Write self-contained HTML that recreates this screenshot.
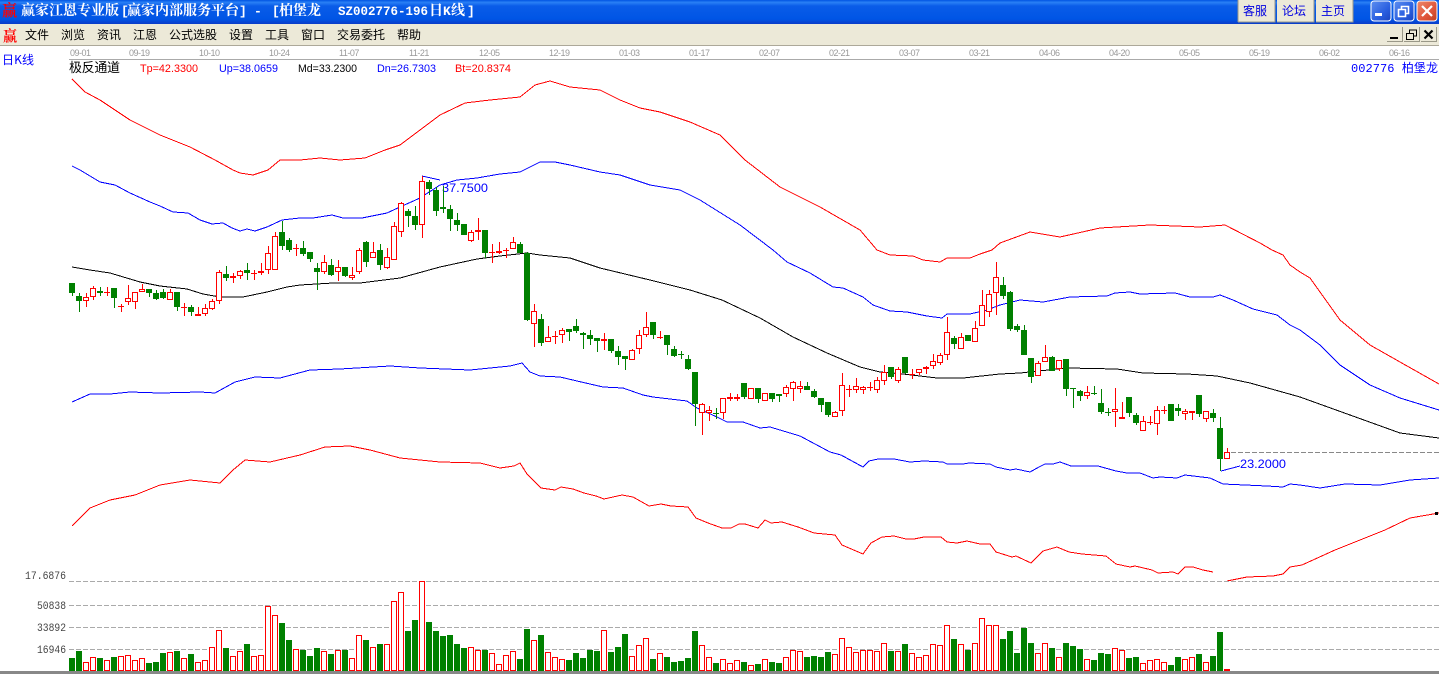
<!DOCTYPE html>
<html lang="zh"><head><meta charset="utf-8"><title>赢家江恩专业版</title>
<style>html,body{margin:0;padding:0;background:#fff;width:1439px;height:674px;overflow:hidden}svg{display:block}text{white-space:pre}</style></head>
<body>
<svg xmlns="http://www.w3.org/2000/svg" width="1439" height="674" viewBox="0 0 1439 674">
<defs>
<linearGradient id="tb" x1="0" y1="0" x2="0" y2="1"><stop offset="0" stop-color="#0054E3"/><stop offset=".1" stop-color="#2a80f5"/><stop offset=".25" stop-color="#0a5ce8"/><stop offset=".8" stop-color="#0055E5"/><stop offset="1" stop-color="#0A3BC8"/></linearGradient>
<linearGradient id="bb" x1="0" y1="0" x2="1" y2="1"><stop offset="0" stop-color="#5d8ff0"/><stop offset=".6" stop-color="#2a5fe0"/><stop offset="1" stop-color="#1a44c0"/></linearGradient>
<linearGradient id="rb" x1="0" y1="0" x2="1" y2="1"><stop offset="0" stop-color="#ec8a6c"/><stop offset=".6" stop-color="#e0553a"/><stop offset="1" stop-color="#c0401f"/></linearGradient>
<clipPath id="cp"><rect x="0" y="60" width="1439" height="521"/></clipPath>
</defs>
<rect width="1439" height="674" fill="#fff"/>
<!-- title bar -->
<rect width="1439" height="24" fill="url(#tb)"/>
<text x="2" y="16" font-family="'Noto Serif CJK SC',serif" font-size="16" font-weight="700" fill="#f00" textLength="15" lengthAdjust="spacingAndGlyphs">赢</text>
<g font-family="'Noto Serif CJK SC','Noto Sans CJK SC',serif" font-size="14" font-weight="700" fill="#fff">
<text x="21" y="15" textLength="98" lengthAdjust="spacingAndGlyphs">赢家江恩专业版</text>
<text x="121" y="15" font-family="'Liberation Mono',monospace" font-size="13">[</text>
<text x="127" y="15" textLength="112" lengthAdjust="spacingAndGlyphs">赢家内部服务平台</text>
<text x="239" y="15" font-family="'Liberation Mono',monospace" font-size="13">]</text>
<text x="254" y="15" font-family="'Liberation Mono',monospace" font-size="13">-</text>
<text x="272" y="15" font-family="'Liberation Mono',monospace" font-size="13">[</text>
<text x="279" y="15" textLength="42" lengthAdjust="spacingAndGlyphs">柏堡龙</text>
<text x="338" y="15" font-family="'Liberation Mono',monospace" font-size="13" textLength="90" lengthAdjust="spacingAndGlyphs">SZ002776-196</text>
<text x="429" y="15" textLength="14" lengthAdjust="spacingAndGlyphs">日</text>
<text x="443" y="15" font-family="'Liberation Mono',monospace" font-size="13">K</text>
<text x="451" y="15" textLength="14" lengthAdjust="spacingAndGlyphs">线</text>
<text x="467" y="15" font-family="'Liberation Mono',monospace" font-size="13">]</text>
</g>
<g>
<rect x="1238" y="0" width="37" height="22" fill="#ECE9D8"/><path d="M1238 22V0M1275 0V22H1238" stroke="#9a9888" fill="none"/>
<rect x="1277" y="0" width="37" height="22" fill="#ECE9D8"/><path d="M1277 22H1314V0" stroke="#9a9888" fill="none"/>
<rect x="1316" y="0" width="37" height="22" fill="#ECE9D8"/><path d="M1316 22H1353V0" stroke="#9a9888" fill="none"/>
<g font-family="'WenQuanYi Zen Hei','Noto Sans CJK SC',sans-serif" font-size="12" fill="#0000e0">
<text x="1243" y="15">客服</text><text x="1282" y="15">论坛</text><text x="1321" y="15">主页</text></g>
<rect x="1371" y="1" width="20" height="20" rx="3" fill="url(#bb)" stroke="#fff"/><rect x="1375" y="13" width="7" height="3" fill="#fff"/>
<rect x="1394" y="1" width="20" height="20" rx="3" fill="url(#bb)" stroke="#fff"/><path d="M1398.5 9.5h7v7h-7zM1401.5 9V6.5h7v7H1406" fill="none" stroke="#fff" stroke-width="1.6"/>
<rect x="1417" y="1" width="20" height="20" rx="3" fill="url(#rb)" stroke="#fff"/><path d="M1422 6l10 10M1432 6l-10 10" stroke="#fff" stroke-width="2.2"/>
</g>
<!-- menu bar -->
<rect y="24" width="1439" height="21" fill="#ECE9D8"/><rect y="45" width="1439" height="1" fill="#ACA899"/>
<text x="3" y="41" font-family="'Noto Serif CJK SC',serif" font-size="15" font-weight="700" fill="#f00" textLength="14" lengthAdjust="spacingAndGlyphs">赢</text>
<g font-family="'WenQuanYi Zen Hei','Noto Sans CJK SC',sans-serif" font-size="12" fill="#000">
<text x="25" y="39">文件</text><text x="61" y="39">浏览</text><text x="97" y="39">资讯</text><text x="133" y="39">江恩</text><text x="169" y="39">公式选股</text><text x="229" y="39">设置</text><text x="265" y="39">工具</text><text x="301" y="39">窗口</text><text x="337" y="39">交易委托</text><text x="397" y="39">帮助</text>
</g>
<g shape-rendering="crispEdges">
<path d="M1387 27h15v15h-15zM1404 27h15v15h-15zM1421 27h15v15h-15z" fill="#ECE9D8"/>
<path d="M1387 41.5h15.5V27M1404 41.5h15.5V27M1421 41.5h15.5V27" fill="none" stroke="#9a9888"/>
<rect x="1390" y="37" width="8" height="2" fill="#000"/>
<path d="M1406.5 33.5h7v6h-7zM1409.5 33v-3h7v6h-3" fill="none" stroke="#000"/>
</g>
<path d="M1424.5 30.5l8 8M1432.5 30.5l-8 8" stroke="#000" stroke-width="2.2"/>
<!-- axis -->
<rect x="69" y="59" width="1370" height="1" fill="#aaa"/>
<g font-family="'Liberation Sans',sans-serif" font-size="9" fill="#999" letter-spacing="-.5">
<text x="70" y="56">09-01</text><text x="129" y="56">09-19</text><text x="199" y="56">10-10</text><text x="269" y="56">10-24</text><text x="339" y="56">11-07</text><text x="409" y="56">11-21</text><text x="479" y="56">12-05</text><text x="549" y="56">12-19</text><text x="619" y="56">01-03</text><text x="689" y="56">01-17</text><text x="759" y="56">02-07</text><text x="829" y="56">02-21</text><text x="899" y="56">03-07</text><text x="969" y="56">03-21</text><text x="1039" y="56">04-06</text><text x="1109" y="56">04-20</text><text x="1179" y="56">05-05</text><text x="1249" y="56">05-19</text><text x="1319" y="56">06-02</text><text x="1389" y="56">06-16</text>
</g>
<text x="2" y="64" font-family="'WenQuanYi Zen Hei','Noto Sans CJK SC',sans-serif" font-size="12" fill="#00f" textLength="32">日K线</text>
<text x="69" y="72" font-family="'WenQuanYi Zen Hei','Noto Sans CJK SC',sans-serif" font-size="13" fill="#000" textLength="51">极反通道</text>
<g font-family="'Liberation Sans',sans-serif" font-size="11">
<text x="140" y="72" fill="#f00" textLength="58" lengthAdjust="spacingAndGlyphs">Tp=42.3300</text>
<text x="219" y="72" fill="#00f" textLength="59" lengthAdjust="spacingAndGlyphs">Up=38.0659</text>
<text x="298" y="72" fill="#000" textLength="59" lengthAdjust="spacingAndGlyphs">Md=33.2300</text>
<text x="377" y="72" fill="#00f" textLength="59" lengthAdjust="spacingAndGlyphs">Dn=26.7303</text>
<text x="455" y="72" fill="#f00" textLength="56" lengthAdjust="spacingAndGlyphs">Bt=20.8374</text>
</g>
<text x="1351" y="72" font-family="'Liberation Mono','WenQuanYi Zen Hei','Noto Sans CJK SC',monospace" font-size="12" fill="#00f" textLength="87">002776 柏堡龙</text>
<!-- bands -->
<g fill="none" stroke-width="1" shape-rendering="crispEdges" clip-path="url(#cp)">
<path stroke="#f00" d="M72 79L85 92L100 100L130 120L160 135L190 147L215 160L233 170L240 173L253 175L268 170L280 160L300 160L320 158L340 160L365 158L385 150L400 145L420 130L440 115L465 103L490 100L520 97L535 85L550 81L570 87L600 90L620 100L640 108L660 112L690 122L720 135L745 160L780 187L820 207L860 230L877 250L890 255L913 256L923 260L940 262L947 258L970 258L980 254L992 250L1000 243L1030 232L1060 237L1100 228L1150 225L1200 227L1225 225L1260 243L1272 250L1283 255L1290 265L1300 272L1310 278L1340 320L1370 345L1400 362L1439 384"/>
<path stroke="#00f" d="M72 166L80 170L90 176L100 182L115 185L130 193L150 202L160 206L173 212L188 213L200 220L212 224L223 223L232 228L240 231L247 229L255 231L267 227L282 220L300 218L313 218L332 215L343 218L362 218L387 213L400 207L420 198L440 185L457 180L477 178L500 174L520 172L540 162L555 162L570 165L600 172L620 175L650 185L680 190L700 200L740 225L773 250L787 262L810 273L833 287L843 288L863 297L873 305L890 311L907 312L927 316L942 318L947 314L970 314L987 310L1000 305L1020 300L1043 302L1070 297L1107 296L1115 293L1130 292L1140 294L1175 293L1190 297L1213 297L1220 295L1233 300L1253 309L1277 315L1290 325L1300 330L1320 345L1340 365L1370 385L1400 398L1439 410"/>
<path stroke="#000" d="M72 267L90 270L110 273L120 276L140 282L160 286L187 289L203 294L220 297L243 297L267 292L287 287L300 285L333 283L360 283L400 278L440 267L477 259L500 256L527 253L540 255L570 258L600 268L650 280L690 290L722 300L760 318L793 337L827 353L860 367L880 372L903 374L937 378L963 378L1000 374L1020 373L1067 368L1117 369L1143 373L1187 374L1217 376L1250 383L1300 397L1350 415L1400 433L1439 438"/>
<path stroke="#00f" d="M72 402L90 394L110 394L130 392L160 393L200 392L215 393L235 382L255 377L280 378L310 370L340 369L390 366L420 368L470 370L510 366L522 363L530 372L540 376L560 377L577 381L603 387L623 388L643 395L653 397L687 401L697 408L717 417L727 422L743 422L760 428L770 427L800 436L830 452L841 455L863 467L869 461L878 459L894 459L910 462L924 461L943 462L947 464L963 464L969 463L990 464L996 467L1010 470L1016 469L1030 472L1039 467L1045 464L1053 464L1060 462L1071 466L1098 466L1116 471L1127 473L1140 473L1153 478L1160 477L1177 478L1185 475L1210 478L1223 484L1267 486L1283 487L1290 484L1300 485L1320 488L1345 484L1380 485L1410 480L1439 478"/>
<path stroke="#f00" d="M72 526L90 508L110 500L135 495L160 485L190 480L220 483L233 470L245 460L270 462L300 455L325 447L350 446L370 450L400 458L440 462L480 463L500 468L514 466L520 463L527 474L541 488L555 490L561 487L573 489L584 493L596 496L604 499L622 495L633 497L649 506L661 504L671 506L688 507L696 518L708 523L722 528L731 528L739 524L745 524L758 528L765 520L771 523L782 522L798 527L814 533L835 535L842 545L863 554L871 543L882 537L894 536L906 539L914 539L924 537L941 537L947 542L957 543L967 541L980 544L990 544L996 552L1012 557L1016 556L1031 563L1043 551L1057 547L1069 552L1082 554L1106 556L1116 564L1130 567L1135 566L1152 570L1158 573L1173 572L1178 574L1185 567L1193 567L1203 570L1213 572M1227 581L1247 577L1273 576L1283 574L1290 567L1302 565L1335 550L1360 540L1385 530L1410 518L1439 513"/>
<path stroke="#00f" d="M422 176L440 180M1221 471L1240 466"/>
<path stroke="#888" stroke-dasharray="5 2" d="M1231 452.5H1439"/>
</g>
<rect x="1435" y="512" width="3" height="3" fill="#000"/>
<text x="442" y="192" font-family="'Liberation Sans',sans-serif" font-size="12" fill="#00f" textLength="46" lengthAdjust="spacingAndGlyphs">37.7500</text>
<text x="1240" y="468" font-family="'Liberation Sans',sans-serif" font-size="12" fill="#00f" textLength="46" lengthAdjust="spacingAndGlyphs">23.2000</text>
<!-- candles -->
<g shape-rendering="crispEdges" clip-path="url(#cp)">
<path fill="none" stroke="#008000" d="M72.5 283V296M79.5 293V312M100.5 287V296M114.5 288V308M149.5 289V297M156.5 290V300M163.5 289V299M177.5 292V311M191.5 305V316M226.5 266V281M247.5 263V280M282.5 221V250M289.5 238V252M303.5 241V256M310.5 252V262M317.5 263V290M331.5 259V276M345.5 267V277M366.5 241V267M380.5 244V270M408.5 209V227M415.5 206V230M429.5 180V195M436.5 187V216M443.5 186V213M450.5 205V231M457.5 213V231M464.5 224V235M485.5 230V258M520.5 242V253M527.5 252V321M541.5 314V346M569.5 329V341M576.5 319V333M583.5 332V349M590.5 330V345M597.5 338V352M611.5 339V353M618.5 346V365M625.5 356V370M653.5 322V339M667.5 335V355M674.5 346V357M681.5 351V359M678 354.5h6M688.5 355V370M695.5 372V426M716.5 408V419M713 413.5h6M744.5 383V399M758.5 388V403M772.5 393V402M779.5 394V402M807.5 382V390M814.5 389V398M821.5 398V412M828.5 402V417M891.5 367V379M905.5 357V374M954.5 336V349M968.5 335V341M1003.5 277V299M1010.5 291V331M1017.5 324V332M1024.5 325V355M1031.5 358V383M1052.5 356V371M1066.5 359V396M1073.5 388V408M1070 388.5h6M1080.5 390V401M1094.5 386V395M1091 393.5h6M1101.5 389V414M1108.5 408V416M1105 412.5h6M1129.5 397V417M1136.5 413V425M1171.5 404V421M1178.5 404V416M1199.5 395V417M1213.5 409V422M1220.5 417V471"/>
<path fill="none" stroke="#f00" d="M86.5 293V307M93.5 286V300M107.5 287V296M104 292.5h6M121.5 304V312M118 306.5h6M128.5 285V305M135.5 292V309M142.5 284V292M170.5 289V300M184.5 303V316M181 307.5h6M198.5 307V316M205.5 304V316M212.5 299V310M219.5 270V304M233.5 273V283M240.5 270V279M254.5 270V280M251 273.5h6M261.5 263V275M268.5 246V274M275.5 232V270M296.5 244V256M293 248.5h6M324.5 255V274M338.5 260V281M352.5 267V280M359.5 248V274M373.5 242V258M387.5 248V269M394.5 222V260M401.5 202V237M422.5 176V238M471.5 230V242M478.5 218V240M492.5 244V263M489 252.5h6M499.5 242V254M506.5 248V258M503 250.5h6M513.5 237V249M534.5 304V347M548.5 326V342M555.5 331V344M552 336.5h6M562.5 328V343M604.5 333V350M632.5 349V360M639.5 330V354M646.5 312V337M660.5 331V339M657 337.5h6M702.5 403V435M709.5 406V421M723.5 398V419M730.5 393V401M737.5 394V401M751.5 388V399M765.5 393V401M786.5 385V397M793.5 381V401M800.5 381V393M835.5 411V417M842.5 373V416M849.5 385V397M846 389.5h6M856.5 378V393M863.5 386V394M870.5 382V391M867 387.5h6M877.5 377V393M884.5 365V385M898.5 367V383M912.5 369V379M909 374.5h6M919.5 369V375M926.5 366V374M933.5 354V369M940.5 353V365M947.5 317V360M961.5 333V349M975.5 321V342M982.5 290V326M989.5 290V317M996.5 262V315M1038.5 361V376M1045.5 345V362M1059.5 360V371M1087.5 386V399M1115.5 388V427M1122.5 402V419M1143.5 416V431M1150.5 416V425M1147 422.5h6M1157.5 406V435M1164.5 406V414M1161 410.5h6M1185.5 409V420M1192.5 411V420M1206.5 411V422M1227.5 448V459"/>
<path fill="#008000" d="M69 283h6v10h-6zM76 296h6v5h-6zM97 291h6v2h-6zM111 288h6v10h-6zM146 289h6v4h-6zM153 293h6v6h-6zM160 292h6v6h-6zM174 292h6v15h-6zM188 307h6v5h-6zM223 274h6v4h-6zM244 270h6v3h-6zM279 232h6v14h-6zM286 240h6v10h-6zM300 248h6v6h-6zM307 252h6v7h-6zM314 268h6v4h-6zM328 265h6v10h-6zM342 267h6v9h-6zM363 242h6v20h-6zM377 250h6v15h-6zM405 211h6v5h-6zM412 216h6v9h-6zM426 182h6v7h-6zM433 190h6v21h-6zM440 207h6v2h-6zM447 209h6v10h-6zM454 220h6v5h-6zM461 224h6v11h-6zM482 230h6v23h-6zM517 244h6v9h-6zM524 253h6v67h-6zM538 319h6v24h-6zM566 329h6v3h-6zM573 326h6v5h-6zM580 333h6v2h-6zM587 335h6v4h-6zM594 338h6v3h-6zM608 339h6v12h-6zM615 351h6v6h-6zM622 356h6v3h-6zM650 322h6v13h-6zM664 335h6v10h-6zM671 349h6v7h-6zM685 359h6v10h-6zM692 372h6v32h-6zM741 383h6v14h-6zM755 388h6v11h-6zM769 393h6v6h-6zM776 394h6v2h-6zM804 386h6v4h-6zM811 391h6v6h-6zM818 398h6v7h-6zM825 402h6v13h-6zM888 367h6v10h-6zM902 357h6v16h-6zM951 338h6v6h-6zM965 335h6v6h-6zM1000 285h6v11h-6zM1007 292h6v37h-6zM1014 326h6v4h-6zM1021 330h6v25h-6zM1028 358h6v19h-6zM1049 357h6v14h-6zM1063 359h6v30h-6zM1077 391h6v5h-6zM1098 403h6v9h-6zM1126 397h6v16h-6zM1133 415h6v8h-6zM1168 404h6v17h-6zM1175 408h6v3h-6zM1196 395h6v19h-6zM1210 413h6v5h-6zM1217 428h6v31h-6z"/>
<path fill="#f00" d="M195 314h6v2h-6zM230 276h6v2h-6zM258 271h6v2h-6zM475 230h6v2h-6zM496 251h6v2h-6zM601 339h6v2h-6zM727 397h6v2h-6zM734 397h6v2h-6zM923 367h6v2h-6zM1119 417h6v2h-6zM1189 411h6v2h-6z"/>
<path fill="#fff" stroke="#f00" d="M83.5 297.5h5v3h-5zM90.5 288.5h5v8h-5zM125.5 298.5h5v3h-5zM132.5 292.5h5v9h-5zM139.5 289.5h5v2h-5zM167.5 292.5h5v7h-5zM202.5 308.5h5v5h-5zM209.5 301.5h5v7h-5zM216.5 272.5h5v28h-5zM237.5 271.5h5v4h-5zM265.5 253.5h5v16h-5zM272.5 236.5h5v33h-5zM321.5 262.5h5v9h-5zM335.5 267.5h5v4h-5zM349.5 275.5h5v2h-5zM356.5 250.5h5v21h-5zM370.5 252.5h5v5h-5zM384.5 257.5h5v10h-5zM391.5 226.5h5v33h-5zM398.5 203.5h5v28h-5zM419.5 181.5h5v43h-5zM468.5 232.5h5v8h-5zM510.5 242.5h5v6h-5zM531.5 311.5h5v12h-5zM545.5 337.5h5v4h-5zM559.5 330.5h5v4h-5zM629.5 350.5h5v9h-5zM636.5 335.5h5v13h-5zM643.5 327.5h5v7h-5zM699.5 404.5h5v8h-5zM706.5 410.5h5v2h-5zM720.5 398.5h5v14h-5zM748.5 388.5h5v10h-5zM762.5 393.5h5v7h-5zM783.5 387.5h5v6h-5zM790.5 382.5h5v6h-5zM797.5 386.5h5v2h-5zM832.5 412.5h5v4h-5zM839.5 385.5h5v25h-5zM853.5 386.5h5v3h-5zM860.5 387.5h5v2h-5zM874.5 380.5h5v9h-5zM881.5 372.5h5v8h-5zM895.5 369.5h5v11h-5zM916.5 369.5h5v3h-5zM930.5 361.5h5v4h-5zM937.5 355.5h5v7h-5zM944.5 332.5h5v22h-5zM958.5 337.5h5v11h-5zM972.5 328.5h5v13h-5zM979.5 305.5h5v20h-5zM986.5 294.5h5v17h-5zM993.5 277.5h5v15h-5zM1035.5 363.5h5v12h-5zM1042.5 357.5h5v4h-5zM1056.5 360.5h5v8h-5zM1084.5 392.5h5v3h-5zM1112.5 409.5h5v2h-5zM1140.5 421.5h5v9h-5zM1154.5 410.5h5v13h-5zM1182.5 411.5h5v2h-5zM1203.5 411.5h5v7h-5zM1224.5 452.5h5v6h-5z"/>
</g>
<!-- volume panel -->
<g stroke="#aaa" stroke-dasharray="5 2" shape-rendering="crispEdges" fill="none">
<path d="M69 581.5H1439M69 605.5H1439M69 627.5H1439M69 649.5H1439"/>
</g>
<g font-family="'Liberation Mono',monospace" font-size="11" fill="#444">
<text x="25" y="579" textLength="41" lengthAdjust="spacingAndGlyphs">17.6876</text>
<text x="37" y="609" textLength="29" lengthAdjust="spacingAndGlyphs">50838</text>
<text x="37" y="631" textLength="29" lengthAdjust="spacingAndGlyphs">33892</text>
<text x="37" y="653" textLength="29" lengthAdjust="spacingAndGlyphs">16946</text>
</g>
<g shape-rendering="crispEdges">
<path fill="#008000" d="M69 658h6V671h-6zM76 651h6V671h-6zM97 658h6V671h-6zM111 657h6V671h-6zM146 663h6V671h-6zM153 662h6V671h-6zM160 653h6V671h-6zM174 651h6V671h-6zM188 654h6V671h-6zM223 648h6V671h-6zM244 644h6V671h-6zM279 623h6V671h-6zM286 640h6V671h-6zM300 650h6V671h-6zM307 656h6V671h-6zM314 648h6V671h-6zM328 654h6V671h-6zM342 650h6V671h-6zM363 640h6V671h-6zM377 644h6V671h-6zM405 631h6V671h-6zM412 620h6V671h-6zM426 622h6V671h-6zM433 631h6V671h-6zM440 636h6V671h-6zM447 635h6V671h-6zM454 644h6V671h-6zM461 648h6V671h-6zM482 650h6V671h-6zM517 659h6V671h-6zM524 629h6V671h-6zM538 635h6V671h-6zM566 660h6V671h-6zM573 653h6V671h-6zM580 658h6V671h-6zM587 650h6V671h-6zM594 651h6V671h-6zM608 652h6V671h-6zM615 647h6V671h-6zM622 634h6V671h-6zM650 659h6V671h-6zM664 657h6V671h-6zM671 662h6V671h-6zM678 661h6V671h-6zM685 658h6V671h-6zM692 631h6V671h-6zM713 663h6V671h-6zM741 662h6V671h-6zM755 664h6V671h-6zM769 662h6V671h-6zM776 663h6V671h-6zM804 657h6V671h-6zM811 656h6V671h-6zM818 657h6V671h-6zM825 652h6V671h-6zM888 651h6V671h-6zM902 644h6V671h-6zM951 639h6V671h-6zM965 650h6V671h-6zM1000 639h6V671h-6zM1007 631h6V671h-6zM1014 653h6V671h-6zM1021 628h6V671h-6zM1028 643h6V671h-6zM1049 648h6V671h-6zM1063 643h6V671h-6zM1070 646h6V671h-6zM1077 649h6V671h-6zM1091 660h6V671h-6zM1098 653h6V671h-6zM1105 654h6V671h-6zM1126 658h6V671h-6zM1133 657h6V671h-6zM1168 665h6V671h-6zM1175 657h6V671h-6zM1196 654h6V671h-6zM1210 656h6V671h-6zM1217 632h6V671h-6z"/>
<path fill="#f00" d="M1224 669h6V671h-6z"/>
<path fill="#fff" stroke="#f00" d="M83.5 662.5h5V670.5h-5zM90.5 657.5h5V670.5h-5zM104.5 660.5h5V670.5h-5zM118.5 656.5h5V670.5h-5zM125.5 655.5h5V670.5h-5zM132.5 660.5h5V670.5h-5zM139.5 658.5h5V670.5h-5zM167.5 652.5h5V670.5h-5zM181.5 658.5h5V670.5h-5zM195.5 662.5h5V670.5h-5zM202.5 660.5h5V670.5h-5zM209.5 647.5h5V670.5h-5zM216.5 630.5h5V670.5h-5zM230.5 656.5h5V670.5h-5zM237.5 651.5h5V670.5h-5zM251.5 656.5h5V670.5h-5zM258.5 655.5h5V670.5h-5zM265.5 606.5h5V670.5h-5zM272.5 615.5h5V670.5h-5zM293.5 649.5h5V670.5h-5zM321.5 651.5h5V670.5h-5zM335.5 650.5h5V670.5h-5zM349.5 658.5h5V670.5h-5zM356.5 635.5h5V670.5h-5zM370.5 647.5h5V670.5h-5zM384.5 644.5h5V670.5h-5zM391.5 601.5h5V670.5h-5zM398.5 592.5h5V670.5h-5zM419.5 581.5h5V670.5h-5zM468.5 647.5h5V670.5h-5zM475.5 650.5h5V670.5h-5zM489.5 653.5h5V670.5h-5zM496.5 664.5h5V670.5h-5zM503.5 655.5h5V670.5h-5zM510.5 651.5h5V670.5h-5zM531.5 640.5h5V670.5h-5zM545.5 652.5h5V670.5h-5zM552.5 657.5h5V670.5h-5zM559.5 659.5h5V670.5h-5zM601.5 630.5h5V670.5h-5zM629.5 656.5h5V670.5h-5zM636.5 645.5h5V670.5h-5zM643.5 638.5h5V670.5h-5zM657.5 653.5h5V670.5h-5zM699.5 645.5h5V670.5h-5zM706.5 657.5h5V670.5h-5zM720.5 659.5h5V670.5h-5zM727.5 663.5h5V670.5h-5zM734.5 660.5h5V670.5h-5zM748.5 665.5h5V670.5h-5zM762.5 659.5h5V670.5h-5zM783.5 657.5h5V670.5h-5zM790.5 650.5h5V670.5h-5zM797.5 651.5h5V670.5h-5zM832.5 654.5h5V670.5h-5zM839.5 638.5h5V670.5h-5zM846.5 647.5h5V670.5h-5zM853.5 652.5h5V670.5h-5zM860.5 650.5h5V670.5h-5zM867.5 650.5h5V670.5h-5zM874.5 651.5h5V670.5h-5zM881.5 643.5h5V670.5h-5zM895.5 651.5h5V670.5h-5zM909.5 653.5h5V670.5h-5zM916.5 657.5h5V670.5h-5zM923.5 655.5h5V670.5h-5zM930.5 644.5h5V670.5h-5zM937.5 645.5h5V670.5h-5zM944.5 625.5h5V670.5h-5zM958.5 644.5h5V670.5h-5zM972.5 643.5h5V670.5h-5zM979.5 618.5h5V670.5h-5zM986.5 625.5h5V670.5h-5zM993.5 625.5h5V670.5h-5zM1035.5 653.5h5V670.5h-5zM1042.5 643.5h5V670.5h-5zM1056.5 657.5h5V670.5h-5zM1084.5 659.5h5V670.5h-5zM1112.5 648.5h5V670.5h-5zM1119.5 650.5h5V670.5h-5zM1140.5 663.5h5V670.5h-5zM1147.5 660.5h5V670.5h-5zM1154.5 659.5h5V670.5h-5zM1161.5 662.5h5V670.5h-5zM1182.5 659.5h5V670.5h-5zM1189.5 657.5h5V670.5h-5zM1203.5 662.5h5V670.5h-5z"/>
</g>
<rect y="671" width="1439" height="3" fill="#888"/>
</svg>
</body></html>
